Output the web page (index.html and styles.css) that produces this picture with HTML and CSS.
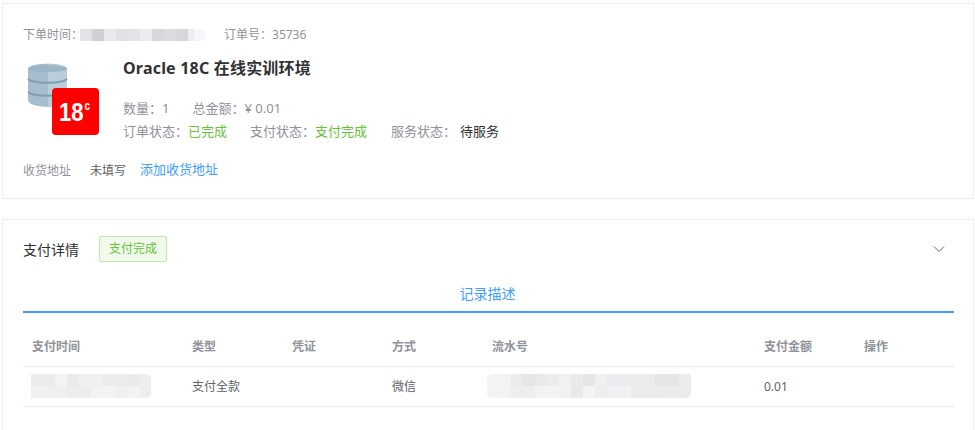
FILE: index.html
```html
<!DOCTYPE html>
<html>
<head>
  <title>订单详情</title>
  <link rel="stylesheet" href="styles.css">
</head>
<body>
  <div class="page">
    <div class="card order-card">
      <div class="order-head">
        <span class="label">下单时间：</span>
        <span class="mosaic mosaic-time"></span>
        <span class="label order-no">订单号：35736</span>
      </div>
      <div class="product">
        <svg class="product-icon" width="80" height="80" viewBox="0 0 80 80">
          <path d="M3 14C3 7 42 7 42 14V45C42 54 3 54 3 45Z" fill="#a5bdcc"/>
          <path d="M23 9C34 9.200 42 11 42 14V45C42 49 34 51.500 23 52Z" fill="#b9ced9"/>
          <path d="M3 14C3 18 42 18 42 14C42 9 3 9 3 14Z" fill="#9ab5c6"/>
          <path d="M3 24C8 29 37 29 42 24M3 37C8 42 37 42 42 37" fill="none" stroke="#7f9fb1" stroke-width="2"/>
          <rect x="27" y="33" width="47" height="47" rx="4" fill="#ff0000"/>
          <text class="icon-num" transform="translate(34 66) scale(.85 1)">18<tspan class="icon-sup" dx="1" dy="-11">c</tspan></text>
        </svg>
        <div class="product-info">
          <h2 class="product-title">Oracle 18C 在线实训环境</h2>
          <div class="meta-row meta-first">
            <span class="meta-item">数量：<span class="meta-num">1</span></span>
            <span class="meta-item">总金额：<span class="meta-num">¥ 0.01</span></span>
          </div>
          <div class="meta-row">
            <span class="meta-item">订单状态：<span class="green">已完成</span></span>
            <span class="meta-item">支付状态：<span class="green">支付完成</span></span>
            <span class="meta-item meta-service">服务状态：<span class="dark">待服务</span></span>
          </div>
        </div>
      </div>
      <div class="address">
        <span class="label">收货地址</span>
        <span class="address-value">未填写</span>
        <a class="address-link">添加收货地址</a>
      </div>
    </div>

    <div class="card pay-card">
      <div class="pay-head">
        <span class="pay-title">支付详情</span>
        <span class="tag">支付完成</span>
        <svg class="chevron" width="12" height="12" viewBox="0 0 12 12">
          <path d="M1 3.500L6 8.500L11 3.500" fill="none" stroke="#4f6a96" stroke-width="1"/>
        </svg>
      </div>
      <div class="tab">记录描述</div>
      <table class="pay-table">
        <thead>
          <tr>
            <th class="col-time">支付时间</th>
            <th class="col-type">类型</th>
            <th class="col-type">凭证</th>
            <th class="col-type">方式</th>
            <th class="col-serial">流水号</th>
            <th class="col-type">支付金额</th>
            <th>操作</th>
          </tr>
        </thead>
        <tbody>
          <tr>
            <td><div class="mosaic mosaic-paytime"></div></td>
            <td>支付全款</td>
            <td></td>
            <td>微信</td>
            <td><div class="mosaic mosaic-serial"></div></td>
            <td>0.01</td>
            <td></td>
          </tr>
        </tbody>
      </table>
    </div>
  </div>
</body>
</html>
```

FILE: styles.css
```css
* {
  box-sizing: border-box;
}

body {
  margin: 0;
  background-color: #fff;
  font-family: "Noto Sans", "Noto Sans CJK SC", sans-serif;
  font-size: 12px;
  color: #606266;
}

.page {
  padding: 3px 1px 0 2px;
  height: 430px;
  overflow: hidden;
}

.card {
  border: 1px solid #ebeef5;
  background-color: #fff;
}

.order-card {
  height: 196px;
  padding: 21px 20px 0;
}

.pay-card {
  margin-top: 20px;
  height: 240px;
  padding: 0 19px 0 20px;
}

.label {
  color: #909399;
  line-height: 20px;
}

.order-head {
  display: flex;
  align-items: center;
  height: 20px;
}

.order-no {
  margin-left: 18px;
}

.mosaic {
  display: block;
  background-repeat: no-repeat;
}

.mosaic-time {
  width: 126px;
  height: 12px;
  margin-left: -3px;
  border-radius: 0 6px 6px 0;
  background-image: linear-gradient(90deg,
    #e3e3e6 0 12px, #cfcfd5 12px 24px, #e9e9ec 24px 36px, #e1e1e5 36px 48px,
    #e4e4e8 48px 60px, #ececef 60px 72px, #d7d7db 72px 84px, #dcdce0 84px 96px,
    #d7d7db 96px 108px, #eeeef2 108px 114px, #f6f7fc 114px 126px);
}

.product {
  display: flex;
  margin-top: 10px;
}

.product-icon {
  flex: none;
  margin-left: 2px;
  margin-right: 18px;
}

.icon-num {
  font-family: "Liberation Sans", sans-serif;
  font-size: 26px;
  font-weight: bold;
  fill: #fff;
}

.icon-sup {
  font-size: 12px;
}

.product-info {
  padding-top: 1px;
}

.product-title {
  margin: 0;
  font-size: 16px;
  font-weight: bold;
  line-height: 24px;
  letter-spacing: 0.2px;
  color: #303133;
}

.meta-row {
  display: flex;
  gap: 23px;
  font-size: 13px;
  line-height: 23px;
  color: #909399;
}

.meta-first {
  margin-top: 17px;
}

.meta-service {
  margin-left: 1px;
}

.meta-num {
  color: #909399;
}

.green {
  color: #67c23a;
}

.dark {
  color: #303133;
  margin-left: 4px;
}

.address {
  display: flex;
  align-items: center;
  margin-top: 18px;
  height: 20px;
}

.address-value {
  margin-left: 19px;
  line-height: 20px;
  color: #606266;
}

.address-link {
  margin-left: 14px;
  margin-bottom: 4px;
  font-size: 13px;
  line-height: 20px;
  color: #409eff;
}

.pay-head {
  display: flex;
  align-items: center;
  height: 58px;
}

.pay-title {
  font-size: 14px;
  color: #303133;
}

.tag {
  margin-left: 20px;
  width: 68px;
  height: 26px;
  line-height: 24px;
  text-align: center;
  border: 1px solid #c2e7b0;
  border-radius: 2px;
  background-color: #f0f9eb;
  color: #67c23a;
}

.chevron {
  margin-left: auto;
  margin-right: 9px;
}

.tab {
  height: 35px;
  padding: 1px 2px 0 0;
  line-height: 30px;
  text-align: center;
  font-size: 14px;
  color: #409eff;
  border-bottom: 2px solid #409eff;
}

.pay-table {
  width: 100%;
  margin-top: 13px;
  border-collapse: collapse;
  table-layout: fixed;
}

.pay-table th,
.pay-table td {
  padding: 0 9px;
  text-align: left;
  border-bottom: 1px solid #ebeef5;
}

.pay-table th {
  height: 40px;
  font-weight: bold;
  color: #909399;
}

.pay-table td {
  height: 40px;
  color: #606266;
}

.col-time {
  width: 160px;
}

.col-type {
  width: 100px;
}

.col-serial {
  width: 272px;
}

.mosaic-paytime {
  width: 120px;
  height: 24px;
  margin-left: -1px;
  border-radius: 0 5px 5px 0;
  background-image:
    linear-gradient(90deg, #ececec 0 24px, #f3f3f3 24px 36px, #eaeaea 36px 48px, #eff0f1 48px 72px, #ebebeb 72px 96px, #eaeaec 96px 108px, #eeeeef 108px 120px),
    linear-gradient(90deg, #f0f0f0 0 36px, #ededed 36px 60px, #f3f3f3 60px 72px, #f3f3f1 72px 84px, #efefef 84px 96px, #f3f3f3 96px 108px, #eeeeee 108px 120px);
  background-size: 100% 12px;
  background-position: 0 0, 0 12px;
}

.mosaic-serial {
  width: 204px;
  height: 24px;
  margin-left: -5px;
  border-radius: 5px 0 5px 5px;
  background-image:
    linear-gradient(90deg, #f3f3f3 0 24px, #ebebeb 24px 36px, #e6e6e7 36px 48px, #e9e9ea 48px 60px, #ececec 60px 72px, #f1f1f1 72px 84px, #eaeaeb 84px 96px, #e6e6e8 96px 108px, #f0f0ee 108px 120px, #e9ebee 120px 132px, #ebebeb 132px 168px, #e6e5e4 168px 192px, #ececed 192px 204px),
    linear-gradient(90deg, #f3f3f3 0 24px, #eeeeee 24px 48px, #f3f3f3 48px 72px, #f0f1f1 72px 84px, #e8e9ea 84px 96px, #f5f4f3 96px 108px, #ecedef 108px 120px, #f2f2f4 120px 144px, #ececec 144px 180px, #ebebeb 180px 204px);
  background-size: 100% 12px;
  background-position: 0 0, 0 12px;
}
```
